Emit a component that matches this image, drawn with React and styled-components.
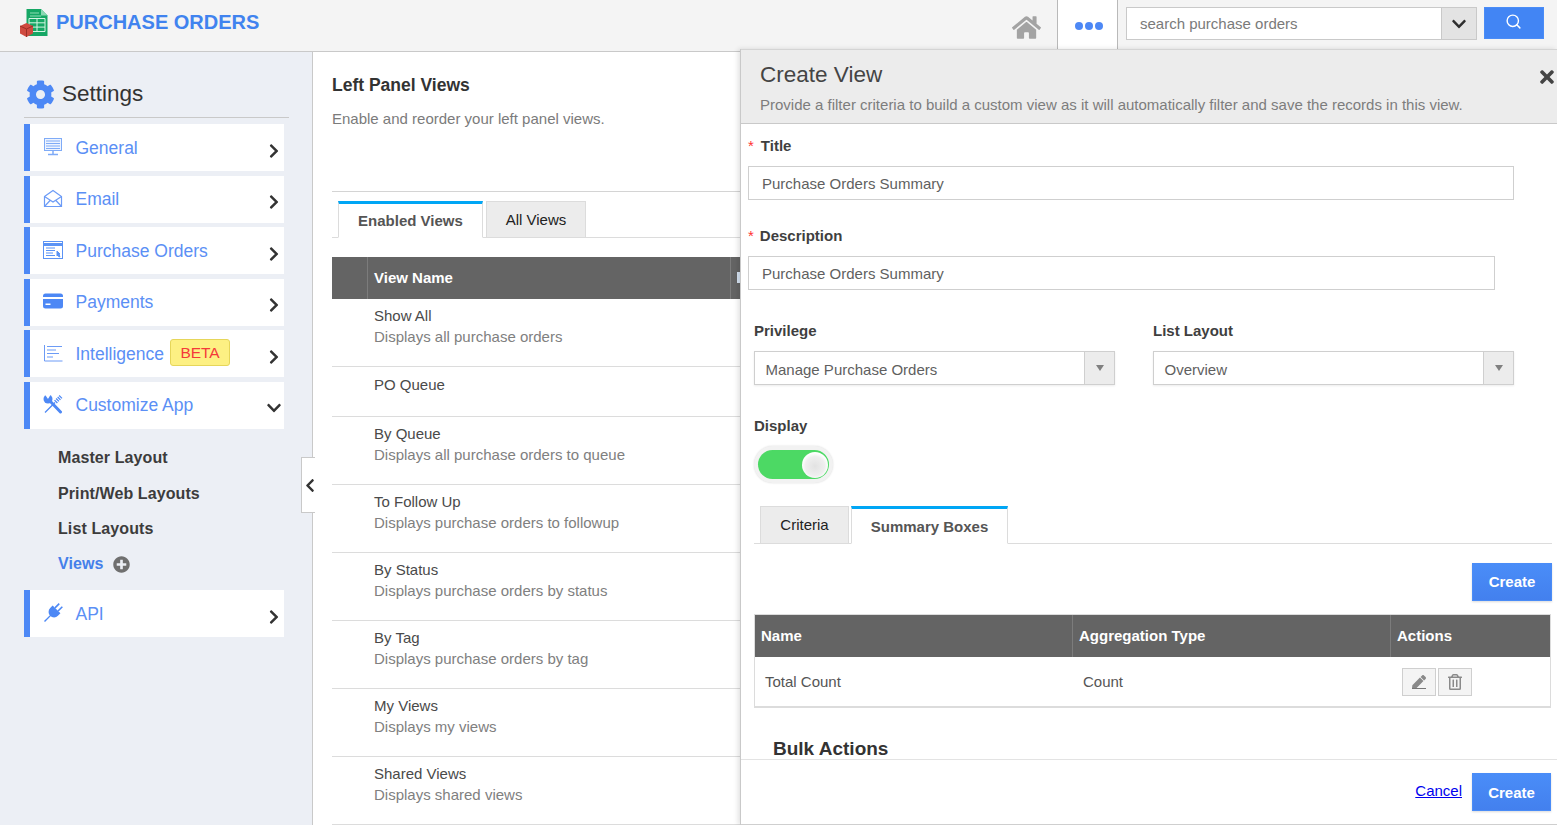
import React from 'react';
import styled, { createGlobalStyle } from 'styled-components';
import {
  FaChevronRight,
  FaChevronDown,
  FaChevronLeft,
  FaCog,
  FaHome,
  FaTimes,
  FaPlusCircle,
  FaPen,
  FaRegTrashAlt,
} from 'react-icons/fa';
import { Search } from 'lucide-react';

const GlobalStyle = createGlobalStyle`
  html, body {
    margin: 0;
    padding: 0;
    height: 100%;
    overflow: hidden;
    background: #fff;
    font-family: "Liberation Sans", Arial, sans-serif;
  }
  * { box-sizing: border-box; }
`;

const Page = styled.div`
  position: relative;
  width: 1557px;
  height: 825px;
  overflow: hidden;
`;

/* top bar */
const TopBar = styled.header`
  height: 52px;
  display: flex;
  align-items: stretch;
  background: #f4f4f4;
  border-bottom: 1px solid #c9c9c9;
`;

const Brand = styled.div`
  display: flex;
  align-items: center;
  padding: 0 0 7px 20px;
  gap: 6px;
  flex: 1;
  svg { margin-top: 2px; }
`;

const BrandName = styled.span`
  font-size: 20px;
  font-weight: 700;
  color: #4083ef;
`;

const HomeLink = styled.div`
  width: 61px;
  padding: 3px 0 0 16px;
  color: #a3a3a3;
  font-size: 29px;
  display: flex;
  align-items: center;
`;

const MoreButton = styled.div`
  width: 61px;
  background: #fff;
  border-left: 1px solid #b9b9b9;
  border-right: 1px solid #b9b9b9;
  margin-bottom: -1px;
  display: flex;
  align-items: center;
  justify-content: center;
  gap: 2px;
  padding-left: 2px;
`;

const Dot = styled.i`
  width: 8px;
  height: 8px;
  border-radius: 50%;
  background: #4d88f5;
`;

const SearchBox = styled.div`
  margin: 7px 0 0 8px;
  width: 351px;
  height: 33px;
  display: flex;
  border: 1px solid #c9c9c9;
  background: #fff;
`;

const SearchText = styled.div`
  flex: 1;
  padding-left: 13px;
  font-size: 15px;
  line-height: 31px;
  color: #7a7a7a;
`;

const SearchToggle = styled.div`
  width: 35px;
  background: #e3e3e3;
  border-left: 1px solid #c9c9c9;
  display: flex;
  align-items: center;
  justify-content: center;
  color: #2f2f2f;
  font-size: 16px;
`;

const SearchButton = styled.div`
  margin: 7px 13px 0 7px;
  width: 60px;
  height: 32px;
  background: #4285f4;
  border: 1px solid #4a8cf7;
  display: flex;
  align-items: center;
  justify-content: center;
  color: #fff;
  padding: 0 2px 3px 0;
`;

/* page body */
const Body = styled.div`
  display: flex;
  height: 773px;
`;

const Sidebar = styled.aside`
  width: 313px;
  flex: none;
  background: #eceff5;
  border-right: 1px solid #c9c9c9;
  padding: 25px 0 0 24px;
`;

const SettingsTitle = styled.div`
  width: 265px;
  height: 41px;
  display: flex;
  align-items: center;
  gap: 7px;
  padding: 0 0 6px 2px;
  border-bottom: 1px solid #c9c9c9;
  margin-bottom: 6px;
  font-size: 22.5px;
  color: #333;
  svg { color: #4d88f5; font-size: 29px; }
`;

const MenuItem = styled.div`
  width: 260px;
  height: 47px;
  margin-bottom: 4.6px;
  background: #fff;
  border-left: 6px solid #4d88f5;
  display: flex;
  align-items: center;
  padding: 0 2px 0 13px;
`;

const MenuIcon = styled.span`
  width: 20px;
  display: flex;
  justify-content: center;
  color: #5b93f5;
  font-size: 20px;
  margin-bottom: 2px;
`;

const MenuLabel = styled.span`
  margin: 1px 0 0 12.5px;
  font-size: 17.5px;
  color: #5b8ff5;
`;

const Beta = styled.span`
  margin: 0 0 2px 6px;
  width: 60px;
  height: 27px;
  background: #fdf083;
  border: 1px solid #e6d65a;
  border-radius: 3px;
  font-size: 15.5px;
  line-height: 25px;
  text-align: center;
  color: #f43a3a;
`;

const Chevron = styled.span`
  margin-left: auto;
  padding-top: 6px;
  display: flex;
  color: #333;
  font-size: 16px;
`;

const SubMenu = styled.div`
  padding: 12px 0 8px 34px;
  margin-top: -5px;
`;

const SubItem = styled.div`
  height: 35.4px;
  display: flex;
  align-items: center;
  gap: 9px;
  font-size: 16px;
  letter-spacing: 0.1px;
  font-weight: 700;
  color: ${(p) => (p.$active ? '#4580ea' : '#3c3c3c')};
  svg { color: #6f6f6f; font-size: 17px; }
`;

const Collapse = styled.div`
  position: absolute;
  left: 301px;
  top: 457px;
  width: 14px;
  height: 56px;
  background: #fff;
  border: 1px solid #c9c9c9;
  border-right: none;
  display: flex;
  align-items: center;
  padding-left: 3px;
  color: #333;
  font-size: 15px;
`;

/* left panel views */
const Main = styled.main`
  flex: 1;
  padding: 22px 0 0 19px;
`;

const MainTitle = styled.h2`
  margin: 0;
  font-size: 17.5px;
  line-height: 22px;
  color: #333;
`;

const MainHint = styled.p`
  margin: 13px 0 0;
  font-size: 15px;
  line-height: 20px;
  height: 82px;
  color: #7b7b7b;
`;

const TabBar = styled.div`
  display: flex;
  align-items: flex-end;
  gap: ${(p) => p.$gap || 3}px;
  height: ${(p) => p.$h || 47}px;
  padding-left: ${(p) => p.$pad || 0}px;
  border-bottom: 1px solid #dcdcdc;
  border-top: ${(p) => (p.$ruled ? '1px solid #d4d4d4' : 'none')};
`;

const Tab = styled.div`
  width: ${(p) => p.$w}px;
  height: ${(p) => p.$h || 37}px;
  margin-bottom: -1px;
  text-align: center;
  font-size: 15px;
  line-height: ${(p) => (p.$h || 37) - 2}px;
  border: 1px solid #dcdcdc;
  background: #ececec;
  color: #222;
  ${(p) =>
    p.$active &&
    `
    background: #fff;
    border-top: 3px solid #00a6f5;
    border-bottom-color: #fff;
    font-weight: 700;
    line-height: ${(p.$h || 37) - 3}px;
    color: #555;
  `}
`;

const ViewHead = styled.div`
  margin-top: 19px;
  height: 42px;
  display: flex;
  align-items: stretch;
  background: #646464;
  color: #fff;
  font-size: 15px;
  font-weight: 700;
  line-height: 42px;
`;

const HeadCell = styled.div`
  width: ${(p) => p.$w}px;
  padding-left: 6px;
  border-left: ${(p) => (p.$first ? 'none' : '1px solid #7c7c7c')};
`;

const SortMark = styled.i`
  display: block;
  width: 3px;
  height: 11px;
  margin-top: 15px;
  background: #d6e3f2;
`;

const ViewRow = styled.div`
  height: ${(p) => (p.$short ? 50 : 68)}px;
  padding: ${(p) => (p.$short ? 7 : 6)}px 0 0 42px;
  border-bottom: 1px solid #dcdcdc;
  font-size: 15px;
  line-height: 21px;
  color: #4a4a4a;
`;

const ViewDesc = styled.div`
  color: #808080;
`;

/* create view panel */
const Panel = styled.section`
  position: absolute;
  left: 740px;
  top: 49px;
  width: 817px;
  height: 776px;
  background: #fff;
  border-left: 1px solid #c9c9c9;
  box-shadow: -2px 0 5px rgba(0, 0, 0, 0.12);
  display: flex;
  flex-direction: column;
`;

const PanelHead = styled.div`
  position: relative;
  height: 75px;
  flex: none;
  background: #ececec;
  border-top: 1px solid #d4d4d4;
  border-bottom: 1px solid #c9c9c9;
  padding: 11px 0 0 19px;
`;

const PanelTitle = styled.div`
  font-size: 22.5px;
  line-height: 27px;
  color: #444;
`;

const PanelHint = styled.div`
  margin-top: 8px;
  font-size: 15px;
  line-height: 18px;
  color: #7d7d7d;
`;

const CloseIcon = styled.span`
  position: absolute;
  right: 0;
  top: 17px;
  display: flex;
  color: #444;
  font-size: 20px;
`;

const PanelBody = styled.div`
  flex: 1;
  min-height: 0;
  overflow: hidden;
  padding: 13px 0 0 7px;
`;

const Label = styled.label`
  display: block;
  font-size: 15px;
  line-height: 18px;
  font-weight: 700;
  color: #3f3f3f;
`;

const Required = styled.span`
  color: #f33;
  font-weight: 400;
  margin-right: ${(p) => p.$gap}px;
`;

const TextField = styled.div`
  width: ${(p) => p.$w}px;
  height: 34px;
  margin: ${(p) => p.$top}px 0 27px;
  padding-left: 13px;
  border: 1px solid #cfcfcf;
  font-size: 15px;
  line-height: 34px;
  color: #5f5f5f;
`;

const SelectRow = styled.div`
  display: flex;
  gap: 38px;
  margin: 32px 0 0 6px;
`;

const SelectField = styled.div`
  width: 361px;
  height: 34px;
  margin-top: 11px;
  display: flex;
  border: 1px solid #cfcfcf;
  box-shadow: 0 1px 2px rgba(0, 0, 0, 0.08);
  font-size: 15px;
  line-height: 36px;
  color: #5f5f5f;
`;

const SelectText = styled.div`
  flex: 1;
  padding-left: 10.5px;
`;

const SelectCaret = styled.div`
  width: 30px;
  background: #ececec;
  border-left: 1px solid #cfcfcf;
  display: flex;
  align-items: center;
  justify-content: center;
  &::after {
    content: '';
    border-left: 4px solid transparent;
    border-right: 4px solid transparent;
    border-top: 6px solid #808080;
  }
`;

const DisplayBlock = styled.div`
  margin: 32px 0 0 0;
  padding-left: 6px;
`;

const SwitchTrack = styled.div`
  width: 79px;
  height: 37px;
  margin: 11px 0 0 0;
  padding: 4px;
  background: #f2f2f2;
  border-radius: 19px;
  box-shadow: 0 0 2px rgba(0, 0, 0, 0.15);
`;

const SwitchFill = styled.div`
  height: 29px;
  border-radius: 15px;
  background: #4cd964;
  display: flex;
  justify-content: flex-end;
  align-items: center;
  padding-right: 1px;
`;

const SwitchKnob = styled.div`
  width: 26px;
  height: 26px;
  border-radius: 50%;
  background: radial-gradient(circle at 50% 55%, #e2e2e2 0, #efefef 50%, #fff 68%);
`;

const FormTabs = styled.div`
  margin: 22px 5px 0 6px;
`;

const ActionRow = styled.div`
  display: flex;
  justify-content: flex-end;
  padding: 19px 5px 13px 0;
`;

const PrimaryButton = styled.div`
  width: ${(p) => p.$w || 80}px;
  height: 38px;
  background: linear-gradient(#4a8df8, #4380ee);
  border: 1px solid #4a8cf7;
  box-shadow: 0 1px 2px rgba(0, 0, 0, 0.15);
  text-align: center;
  color: #fff;
  font-size: 15px;
  font-weight: 700;
  line-height: 36px;
`;

const FootButton = styled(PrimaryButton)`
  line-height: 38px;
`;

const SummaryTable = styled.div`
  margin: 0 6px 0 6px;
  border: 1px solid #dcdcdc;
  border-bottom-width: 2px;
`;

const SummaryHead = styled.div`
  display: grid;
  grid-template-columns: 317px 318px 1fr;
  height: 42px;
  background: #646464;
  color: #fff;
  font-size: 15px;
  font-weight: 700;
  line-height: 42px;
`;

const SummaryHeadCell = styled.div`
  padding-left: 6px;
  border-left: ${(p) => (p.$first ? 'none' : '1px solid #7c7c7c')};
`;

const SummaryRow = styled.div`
  display: grid;
  grid-template-columns: 317px 318px 1fr;
  height: 49px;
  align-items: center;
  font-size: 15px;
  color: #555;
`;

const SummaryCell = styled.div`
  padding-left: ${(p) => p.$pad}px;
`;

const IconButtons = styled.div`
  display: flex;
  gap: 2px;
  padding-left: 12px;
`;

const IconButton = styled.div`
  width: 34px;
  height: 28px;
  background: #f4f4f4;
  border: 1px solid #cfcfcf;
  display: flex;
  flex-direction: column;
  align-items: center;
  justify-content: center;
  color: #8a8a8a;
  font-size: ${(p) => p.$size}px;
`;

const PenLine = styled.i`
  width: 14px;
  height: 1px;
  background: #777;
  margin-top: -1px;
`;

const BulkTitle = styled.h3`
  margin: 31px 0 0 25px;
  font-size: 19px;
  line-height: 20px;
  color: #333;
`;

const PanelFoot = styled.div`
  height: 66px;
  flex: none;
  border-top: 1px solid #e3e3e3;
  border-bottom: 1px solid #cfcfcf;
  display: flex;
  align-items: center;
  justify-content: flex-end;
  gap: 10px;
  padding: 0 6px 1px 0;
`;

const CancelLink = styled.a`
  font-size: 15px;
  color: #0000ee;
  text-decoration: underline;
  margin-bottom: 3px;
`;

function MonitorIcon() {
  return (
    <svg width="20" height="20" viewBox="0 0 20 20" fill="none" stroke="#7fabf7" strokeWidth="1">
      <rect x="1.5" y="1.5" width="17" height="12" fill="#eef4ff" />
      <path d="M3 4h14M3 6.500h14M3 9h14M3 11.500h14" />
      <path d="M10 14v3M5 17.500h10" strokeWidth="1.500" />
    </svg>
  );
}

function OpenMailIcon() {
  return (
    <svg width="20" height="19" viewBox="0 0 20 19" fill="none" stroke="#6c9bf6" strokeWidth="1.200">
      <path d="M1.500 7.500L10 1.500l8.500 6v10h-17z" />
      <path d="M1.500 7.500L10 13l8.500-5.500M1.500 17.500l6-6.500M18.500 17.500l-6-6.500" />
    </svg>
  );
}

function WindowIcon() {
  return (
    <svg width="20" height="18" viewBox="0 0 20 18" fill="none" stroke="#5b93f5" strokeWidth="1">
      <rect x=".5" y=".5" width="19" height="17" />
      <path d="M.5 3.500h19" strokeWidth="3" />
      <path d="M3 7h9M3 9.500h9M3 12h7M3 14.500h9" />
      <path d="M14 10l3 3-1 .5 1 2-1 .5-1-2-1 1z" fill="#5b93f5" />
    </svg>
  );
}

function CardIcon() {
  return (
    <svg width="20" height="16" viewBox="0 0 20 16">
      <rect width="20" height="15" y=".5" rx="2.500" fill="#4d88f5" />
      <rect y="4" width="20" height="2" fill="#fff" />
      <rect x="2.500" y="10.500" width="5" height="1.500" fill="#fff" />
    </svg>
  );
}

function ChartLinesIcon() {
  return (
    <svg width="20" height="18" viewBox="0 0 20 18" fill="none" stroke="#6c9bf6" strokeWidth="1">
      <path d="M1.500 1v16h18M4 2.500h15M4 6h9M4 9.500h12M4 13h6" />
    </svg>
  );
}

function ToolsIcon() {
  return (
    <svg width="20" height="20" viewBox="0 0 20 20" fill="none">
      <path d="M2 18.500L12 8.500" stroke="#4d88f5" strokeWidth="1.300" />
      <path d="M12.500 8l5.500-5.500" stroke="#4d88f5" strokeWidth="4" strokeDasharray="1.300 .9" />
      <circle cx="5" cy="5" r="4.500" fill="#4d88f5" />
      <path d="M5 5L1.500 0h6.500z" fill="#fff" />
      <path d="M6 6l11.500 12" stroke="#4d88f5" strokeWidth="3" strokeLinecap="round" />
    </svg>
  );
}

function PlugIcon() {
  return (
    <svg width="20" height="20" viewBox="0 0 20 20" fill="#4d88f5">
      <g transform="rotate(45 10 10)">
        <rect x="7" y="-1" width="1.600" height="6" />
        <rect x="11.400" y="-1" width="1.600" height="6" />
        <path d="M4.500 5h11v3.500a5.500 5.500 0 0 1-11 0z" />
        <rect x="9.300" y="13" width="1.400" height="9" />
      </g>
    </svg>
  );
}

function LogoIcon() {
  return (
    <svg width="30" height="30" viewBox="0 0 30 30">
      <path d="M6.500 1H21l6.500 6.500V28h-21z" fill="#16a765" />
      <path d="M21 1v6.500h6.500z" fill="#8ad8b2" />
      <path d="M10 5h9M10 8h11" stroke="#8edcb4" strokeWidth="1" />
      <path d="M9 10.500h16v13H9zM9 14.800h16M9 19.100h16M17 10.500v13" fill="none" stroke="#d5f5e3" strokeWidth="1" />
      <path d="M6.500 15l6.500 3v7.500L6.500 29 0 25.500V18z" fill="#cf4a3f" />
      <path d="M0 18l6.500 3 6.500-3M6.500 21v8" fill="none" stroke="#9c2f27" strokeWidth="1" />
    </svg>
  );
}

const menuTop = [
  { label: 'General', icon: <MonitorIcon /> },
  { label: 'Email', icon: <OpenMailIcon /> },
  { label: 'Purchase Orders', icon: <WindowIcon /> },
  { label: 'Payments', icon: <CardIcon /> },
  { label: 'Intelligence', icon: <ChartLinesIcon />, beta: true },
];

const views = [
  { name: 'Show All', desc: 'Displays all purchase orders' },
  { name: 'PO Queue' },
  { name: 'By Queue', desc: 'Displays all purchase orders to queue' },
  { name: 'To Follow Up', desc: 'Displays purchase orders to followup' },
  { name: 'By Status', desc: 'Displays purchase orders by status' },
  { name: 'By Tag', desc: 'Displays purchase orders by tag' },
  { name: 'My Views', desc: 'Displays my views' },
  { name: 'Shared Views', desc: 'Displays shared views' },
];

export default function App() {
  return (
    <Page>
      <GlobalStyle />
      <TopBar>
        <Brand>
          <LogoIcon />
          <BrandName>PURCHASE ORDERS</BrandName>
        </Brand>
        <HomeLink>
          <FaHome />
        </HomeLink>
        <MoreButton>
          <Dot />
          <Dot />
          <Dot />
        </MoreButton>
        <SearchBox>
          <SearchText>search purchase orders</SearchText>
          <SearchToggle>
            <FaChevronDown />
          </SearchToggle>
        </SearchBox>
        <SearchButton>
          <Search size={17} strokeWidth={2} />
        </SearchButton>
      </TopBar>

      <Body>
        <Sidebar>
          <SettingsTitle>
            <FaCog />
            Settings
          </SettingsTitle>
          {menuTop.map((item) => (
            <MenuItem key={item.label}>
              <MenuIcon>{item.icon}</MenuIcon>
              <MenuLabel>{item.label}</MenuLabel>
              {item.beta && <Beta>BETA</Beta>}
              <Chevron>
                <FaChevronRight />
              </Chevron>
            </MenuItem>
          ))}
          <MenuItem>
            <MenuIcon>
              <ToolsIcon />
            </MenuIcon>
            <MenuLabel>Customize App</MenuLabel>
            <Chevron>
              <FaChevronDown />
            </Chevron>
          </MenuItem>
          <SubMenu>
            <SubItem>Master Layout</SubItem>
            <SubItem>Print/Web Layouts</SubItem>
            <SubItem>List Layouts</SubItem>
            <SubItem $active>
              Views <FaPlusCircle />
            </SubItem>
          </SubMenu>
          <MenuItem>
            <MenuIcon>
              <PlugIcon />
            </MenuIcon>
            <MenuLabel>API</MenuLabel>
            <Chevron>
              <FaChevronRight />
            </Chevron>
          </MenuItem>
        </Sidebar>

        <Main>
          <MainTitle>Left Panel Views</MainTitle>
          <MainHint>Enable and reorder your left panel views.</MainHint>
          <TabBar $ruled $pad={6}>
            <Tab $active $w={145}>
              Enabled Views
            </Tab>
            <Tab $w={100}>All Views</Tab>
          </TabBar>
          <ViewHead>
            <HeadCell $first $w={35} />
            <HeadCell $w={363}>View Name</HeadCell>
            <HeadCell $w={10}>
              <SortMark />
            </HeadCell>
          </ViewHead>
          {views.map((v) => (
            <ViewRow key={v.name} $short={!v.desc}>
              {v.name}
              {v.desc && <ViewDesc>{v.desc}</ViewDesc>}
            </ViewRow>
          ))}
        </Main>
      </Body>

      <Collapse>
        <FaChevronLeft />
      </Collapse>

      <Panel>
        <PanelHead>
          <PanelTitle>Create View</PanelTitle>
          <PanelHint>
            Provide a filter criteria to build a custom view as it will automatically filter and
            save the records in this view.
          </PanelHint>
          <CloseIcon>
            <FaTimes />
          </CloseIcon>
        </PanelHead>
        <PanelBody>
          <Label>
            <Required $gap={7}>*</Required>Title
          </Label>
          <TextField $w={766} $top={11}>
            Purchase Orders Summary
          </TextField>
          <Label>
            <Required $gap={6}>*</Required>Description
          </Label>
          <TextField $w={747} $top={11}>
            Purchase Orders Summary
          </TextField>
          <SelectRow>
            <div>
              <Label>Privilege</Label>
              <SelectField>
                <SelectText>Manage Purchase Orders</SelectText>
                <SelectCaret />
              </SelectField>
            </div>
            <div>
              <Label>List Layout</Label>
              <SelectField>
                <SelectText>Overview</SelectText>
                <SelectCaret />
              </SelectField>
            </div>
          </SelectRow>
          <DisplayBlock>
            <Label>Display</Label>
            <SwitchTrack>
              <SwitchFill>
                <SwitchKnob />
              </SwitchFill>
            </SwitchTrack>
          </DisplayBlock>
          <FormTabs>
            <TabBar $h={39} $pad={6} $gap={2}>
              <Tab $w={89} $h={38}>
                Criteria
              </Tab>
              <Tab $active $w={157} $h={38}>
                Summary Boxes
              </Tab>
            </TabBar>
          </FormTabs>
          <ActionRow>
            <PrimaryButton>Create</PrimaryButton>
          </ActionRow>
          <SummaryTable>
            <SummaryHead>
              <SummaryHeadCell $first>Name</SummaryHeadCell>
              <SummaryHeadCell>Aggregation Type</SummaryHeadCell>
              <SummaryHeadCell>Actions</SummaryHeadCell>
            </SummaryHead>
            <SummaryRow>
              <SummaryCell $pad={10}>Total Count</SummaryCell>
              <SummaryCell $pad={11}>Count</SummaryCell>
              <IconButtons>
                <IconButton $size={14}>
                  <FaPen />
                  <PenLine />
                </IconButton>
                <IconButton $size={16}>
                  <FaRegTrashAlt />
                </IconButton>
              </IconButtons>
            </SummaryRow>
          </SummaryTable>
          <BulkTitle>Bulk Actions</BulkTitle>
        </PanelBody>
        <PanelFoot>
          <CancelLink href="#">Cancel</CancelLink>
          <FootButton $w={79}>Create</FootButton>
        </PanelFoot>
      </Panel>
    </Page>
  );
}
